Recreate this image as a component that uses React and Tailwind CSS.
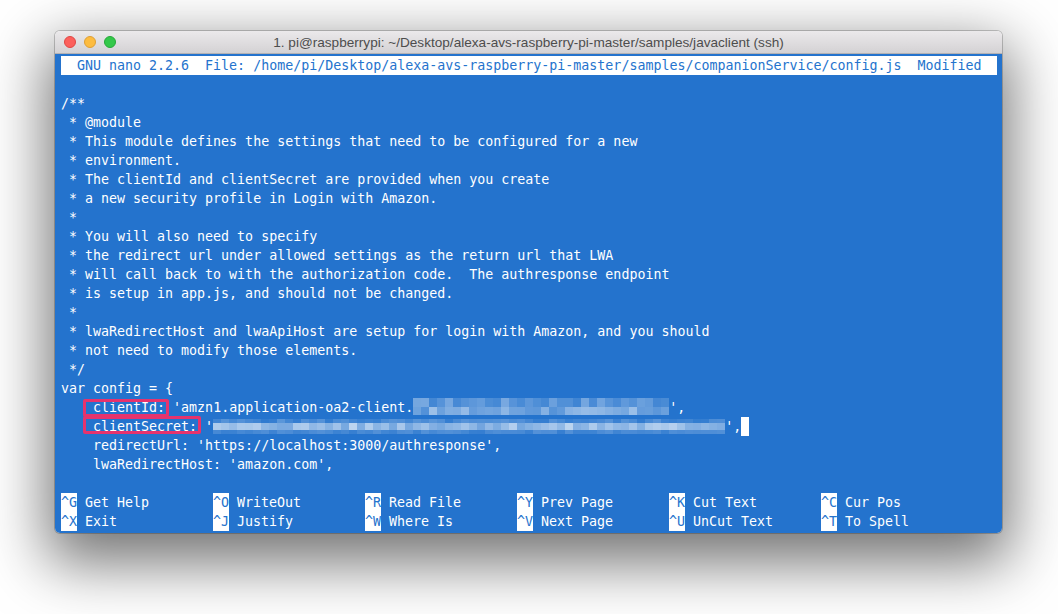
import React from "react";

const BLUE = [36, 115, 205];

function rnd(seed) {
  let s = seed;
  return () => {
    s = (s * 9301 + 49297) % 233280;
    return s / 233280;
  };
}

function mix(t) {
  const c = BLUE.map((v) => Math.round(v + (255 - v) * t));
  return `rgb(${c[0]},${c[1]},${c[2]})`;
}

function Mosaic({ cols, seed, bands }) {
  const w = cols * 8;
  const r = rnd(seed);
  const rects = [];
  bands.forEach((b, bi) => {
    for (let x = 0; x < w; x += 8) {
      const t = b.min + (b.max - b.min) * r();
      rects.push(
        <rect key={bi + "-" + x} x={x} y={b.y} width={8} height={b.h} fill={mix(t)} />
      );
    }
  });
  return (
    <svg width={w} height={19} className="inline-block align-top" style={{ width: w }}>
      {rects}
    </svg>
  );
}

const lines = [
  "/**",
  " * @module",
  " * This module defines the settings that need to be configured for a new",
  " * environment.",
  " * The clientId and clientSecret are provided when you create",
  " * a new security profile in Login with Amazon.",
  " *",
  " * You will also need to specify",
  " * the redirect url under allowed settings as the return url that LWA",
  " * will call back to with the authorization code.  The authresponse endpoint",
  " * is setup in app.js, and should not be changed.",
  " *",
  " * lwaRedirectHost and lwaApiHost are setup for login with Amazon, and you should",
  " * not need to modify those elements.",
  " */",
  "var config = {",
];

const shortcuts = [
  [
    ["^G", "Get Help"],
    ["^O", "WriteOut"],
    ["^R", "Read File"],
    ["^Y", "Prev Page"],
    ["^K", "Cut Text"],
    ["^C", "Cur Pos"],
  ],
  [
    ["^X", "Exit"],
    ["^J", "Justify"],
    ["^W", "Where Is"],
    ["^V", "Next Page"],
    ["^U", "UnCut Text"],
    ["^T", "To Spell"],
  ],
];

function Row({ children }) {
  return <div className="h-[19px] whitespace-pre flex">{children}</div>;
}

export default function App() {
  return (
    <div className="w-[1058px] h-[614px] bg-white pt-[31px] pl-[55px] overflow-hidden">
      <div className="w-[947px] h-[502px] rounded-[5px] overflow-hidden flex flex-col shadow-[0_22px_60px_8px_rgba(0,0,0,0.55)] ring-1 ring-black/20">
        <div className="h-[23px] relative flex items-center bg-gradient-to-b from-[#ebe9eb] to-[#d4d2d4] border-b border-[#b3b1b3] shrink-0">
          <div className="absolute left-[9px] top-[5px] flex gap-[8px]">
            <span className="w-[12px] h-[12px] rounded-full bg-[#fc605c] border border-[#df4744]" />
            <span className="w-[12px] h-[12px] rounded-full bg-[#fdbc40] border border-[#de9f34]" />
            <span className="w-[12px] h-[12px] rounded-full bg-[#34c84a] border border-[#27a839]" />
          </div>
          <div className="w-full text-center text-[13.6px] text-[#4d4d4d] font-['Liberation_Sans',Arial,sans-serif] leading-[23px]">
            1. pi@raspberrypi: ~/Desktop/alexa-avs-raspberry-pi-master/samples/javaclient (ssh)
          </div>
        </div>
        <div className="flex-1 bg-[#2473cd] pt-[2px] pl-[6px] text-white font-['DejaVu_Sans_Mono',monospace] text-[13.3px] leading-[19px]">
          <div className="h-[19px] w-[936px] bg-white text-[#2473cd] whitespace-pre">
            {"  GNU nano 2.2.6  File: /home/pi/Desktop/alexa-avs-raspberry-pi-master/samples/companionService/config.js  Modified"}
          </div>
          <Row>{""}</Row>
          {lines.map((l, i) => (
            <Row key={i}>{l}</Row>
          ))}
          <Row>
            <span>{"    "}</span>
            <span className="relative">
              clientId:
              <span className="absolute left-[-10px] right-[-4px] top-[1px] bottom-[0px] border-[3px] border-[#e6336d] rounded-[2px]" />
            </span>
            <span>{" 'amzn1.application-oa2-client."}</span>
            <Mosaic
              cols={32}
              seed={17}
              bands={[
                { y: 0, h: 9, min: 0.12, max: 0.4 },
                { y: 9, h: 8, min: 0.2, max: 0.55 },
              ]}
            />
            <span>{"',"}</span>
          </Row>
          <Row>
            <span>{"    "}</span>
            <span className="relative">
              clientSecret:
              <span className="absolute left-[-10px] right-[-4px] top-[-1px] bottom-[2px] border-[3px] border-[#e6336d] rounded-[2px]" />
            </span>
            <span>{" '"}</span>
            <Mosaic
              cols={64}
              seed={5}
              bands={[
                { y: 2, h: 4, min: 0.05, max: 0.25 },
                { y: 6, h: 7, min: 0.35, max: 0.7 },
                { y: 13, h: 4, min: 0.08, max: 0.22 },
              ]}
            />
            <span>{"',"}</span>
            <span className="w-[8px] h-[19px] bg-white" />
          </Row>
          <Row>{"    redirectUrl: 'https://localhost:3000/authresponse',"}</Row>
          <Row>{"    lwaRedirectHost: 'amazon.com',"}</Row>
          <Row>{""}</Row>
          {shortcuts.map((row, ri) => (
            <div key={ri} className="h-[19px] flex whitespace-pre">
              {row.map(([k, label], i) => (
                <div key={i} className="w-[152px] flex">
                  <span className="w-[16px] h-[19px] overflow-hidden bg-white text-[#2473cd]">{k}</span>
                  <span>{" " + label}</span>
                </div>
              ))}
            </div>
          ))}
        </div>
      </div>
    </div>
  );
}
